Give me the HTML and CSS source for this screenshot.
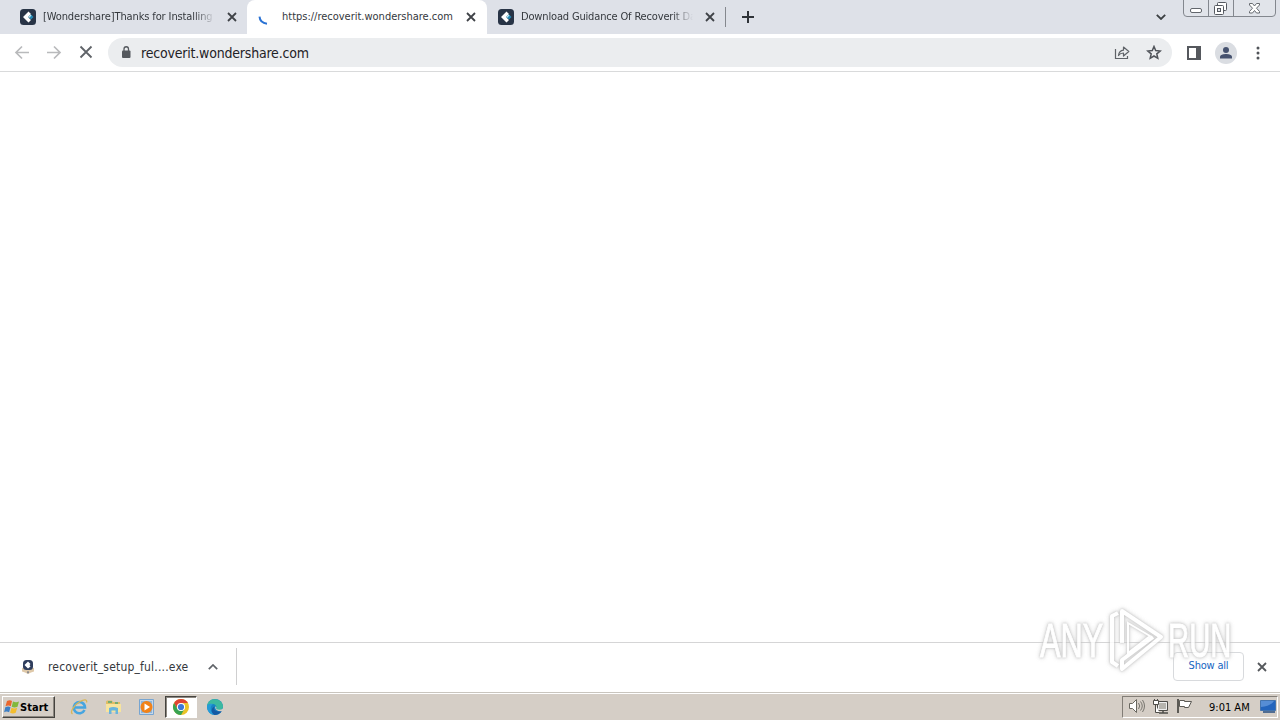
FILE: index.html
```
<!DOCTYPE html>
<html>
<head>
    <meta charset="utf-8">
    <title>recoverit.wondershare.com</title>
    <link rel="stylesheet" href="styles.css">
</head>
<body>
<svg class="defs" width="0" height="0">
    <symbol id="logo" viewBox="0 0 16 16">
        <rect width="16" height="16" rx="3.5" fill="#283446"/>
        <path d="M8.500 2.500L11 5 8 8l3 3-2.500 2.500L3 8z" fill="#fff"/>
        <path d="M11 5.500l2.500 2.500L11 10.500 8.500 8z" fill="#2489b5"/>
        <path d="M8 8l2.500-2.500 1 1L9 9z" fill="#b9e6f3"/>
    </symbol>
    <symbol id="close" viewBox="0 0 10 10">
        <path d="M1 1l8 8M9 1l-8 8" fill="none" stroke="currentColor" stroke-width="1.8"/>
    </symbol>
</svg>
<div id="tabs">
    <div class="tab">
        <svg class="favicon"><use href="#logo"/></svg>
        <div class="title fade"><span class="t1">[Wondershare]Thanks for Installing R</span></div>
        <svg class="x"><use href="#close"/></svg>
    </div>
    <div class="tab active">
        <svg class="favicon" viewBox="0 0 16 16"><path d="M1.500 7.700c.3 3.600 3 6.500 7.500 7" fill="none" stroke="#2a72d4" stroke-width="2"/></svg>
        <div class="title"><span class="t2">https://recoverit.wondershare.com</span></div>
        <svg class="x"><use href="#close"/></svg>
    </div>
    <div class="tab last">
        <svg class="favicon"><use href="#logo"/></svg>
        <div class="title fade"><span class="t3">Download Guidance Of Recoverit Data</span></div>
        <svg class="x"><use href="#close"/></svg>
    </div>
    <div class="divider"></div>
    <svg class="plus" viewBox="0 0 12 12"><path d="M6 0v12M0 6h12" stroke="#2f3338" stroke-width="2"/></svg>
    <svg class="chevron" viewBox="0 0 10 6"><path d="M.8.8L5 5 9.2.8" fill="none" stroke="#3c4043" stroke-width="1.8"/></svg>
    <svg class="winbuttons" viewBox="0 0 94 18">
        <path d="M.5 0v13q0 3.500 3.500 3.500h85q3.500 0 3.500-3.500V0" fill="#e1e4ea" stroke="#83878e"/>
        <path d="M25.500 0v16M50.500 0v16" stroke="#83878e"/>
        <rect x="7.500" y="8.500" width="11" height="4" rx="1.500" fill="#fff" stroke="#62666c"/>
        <rect x="34.500" y="2.500" width="9" height="8" rx="1" fill="#fff" stroke="#555960"/>
        <rect x="31.500" y="5.500" width="9" height="9" rx="1" fill="#fff" stroke="#555960"/>
        <rect x="34.500" y="8.500" width="3" height="3" fill="#e1e4ea" stroke="#555960"/>
        <path d="M66.500 3.500h3l2 2.500 2-2.500h3v1.500l-3 3.200 3 3.300v1.500h-3l-2-2.500-2 2.500h-3v-1.500l3-3.300-3-3.200z" fill="#fff" stroke="#666a70"/>
    </svg>
</div>
<div id="toolbar">
    <svg class="nav" viewBox="0 0 16 16"><path d="M15 7.500H2M8 1.500l-6 6 6 6" fill="none" stroke="#b9babc" stroke-width="1.700"/></svg>
    <svg class="nav" viewBox="0 0 16 16"><path d="M1 7.500h13M8 1.500l6 6-6 6" fill="none" stroke="#b9babc" stroke-width="1.700"/></svg>
    <svg class="nav" viewBox="0 0 16 16"><path d="M2.500 1.500l11 11M13.500 1.500l-11 11" stroke="#5f6368" stroke-width="1.800"/></svg>
    <div id="omnibox">
        <svg class="lock" viewBox="0 0 10 13"><rect x="1" y="4.500" width="8.500" height="7.500" rx="1" fill="#55595e"/><path d="M3 5V3a2.250 2.250 0 0 1 4.500 0v2" fill="none" stroke="#55595e" stroke-width="1.300"/></svg>
        <div class="url"><span>recoverit.wondershare.com</span></div>
        <svg class="share" viewBox="0 0 16 16"><path d="M1.500 4v9.500h12V11" fill="none" stroke="#5f6368" stroke-width="1.200"/><path d="M4.500 10.500c.4-3.500 2-5 5-5.300V2l5.300 4.500-5.300 4.500V8c-2.500 0-4 1-5 2.500z" fill="none" stroke="#5f6368" stroke-width="1.200" stroke-linejoin="round"/></svg>
        <svg class="star" viewBox="0 0 16 16"><path d="M8 1.500l1.700 4.100 4.500.4-3.400 2.900 1 4.400L8 11l-3.800 2.300 1-4.400L1.800 6l4.500-.4z" fill="none" stroke="#50545a" stroke-width="1.500"/></svg>
    </div>
    <svg class="panel" viewBox="0 0 14 14"><path d="M1 1h12v12H1z" fill="#fff" stroke="#55585d" stroke-width="2"/><path d="M9 1h4v12H9z" fill="#55585d"/></svg>
    <svg class="profile" viewBox="0 0 22 22"><circle cx="11" cy="11" r="11" fill="#dadde2"/><circle cx="11" cy="8" r="3" fill="#46526f"/><path d="M5 16.500v-1.500c0-2.200 3.500-3 6-3s6 .8 6 3v1.500z" fill="#46526f"/></svg>
    <svg class="dots" viewBox="0 0 4 14"><circle cx="2" cy="2" r="1.500"/><circle cx="2" cy="7" r="1.500"/><circle cx="2" cy="12" r="1.500"/></svg>
</div>
<div id="page"></div>
<div id="downloads">
    <svg class="file" viewBox="0 0 14 16"><path d="M1 9l2-.5 4 2 4-2 2 .5v3.500l-3 1-3 1.500-3-1.500-3-1z" fill="#dfc9a9"/><rect x="2" y="1" width="10" height="10" rx="3.500" fill="#2f3d5c"/><path d="M7 2.500l2.500 2.500-1 1 1 1.500L7 9.500 3.500 6z" fill="#fff"/><path d="M6 13l1-1 1 1-1 2z" fill="#6f7788"/></svg>
    <div class="filename"><span>recoverit_setup_ful....exe</span></div>
    <svg class="up" viewBox="0 0 10 6"><path d="M.8 5.200L5 1l4.200 4.200" fill="none" stroke="#5f6368" stroke-width="1.700"/></svg>
    <div class="separator"></div>
    <a class="showall" href="#"><span>Show all</span></a>
    <svg class="x"><use href="#close"/></svg>
</div>
<div id="taskbar">
    <div class="start">
        <svg viewBox="0 0 16 16"><path d="M3 2q3-1.500 5 0L6.800 7.200Q4.500 6 1.500 7.200z" fill="#ea662d"/><path d="M9 2.500q3 1.500 6 0l-1.500 5.200q-3 1.500-5.800 0z" fill="#82b83b"/><path d="M1.300 8.200q3-1.200 5.200 0l-1.400 5q-2.600-1.200-5 0z" fill="#3d7fc5"/><path d="M7.500 8.700q3 1.500 5.700 0l-1.500 5.100q-2.700 1.500-5.600 0z" fill="#f3bd2e"/></svg>
        <span>Start</span>
    </div>
    <div class="app"><svg viewBox="0 0 18 18"><path d="M14.500 12A5.600 5.600 0 1 1 15 9.500H5" fill="none" stroke="#46a5e0" stroke-width="2.600"/><path d="M2.500 16C-.5 14 4 7 10 3.500c4.500-2.500 7.500-2 6.500 1" fill="none" stroke="#d9b657" stroke-width="1.300"/></svg></div>
    <div class="app"><svg viewBox="0 0 18 18"><path d="M2 3.500l1-1h5l1 1.500h7v10H2z" fill="#dfbd65"/><path d="M2 6h15v8H2z" fill="#f7e49d"/><path d="M5 10q4-2 9 0v6h-2.500v-3.500h-4V16H5z" fill="#69b5dc"/><path d="M4 4h4M11 5h3" stroke="#55a775" stroke-width="1.500"/></svg></div>
    <div class="app"><svg viewBox="0 0 18 18"><path d="M1.500 1.500h14v15h-14z" fill="#c6d7e8" stroke="#77a5d1"/><path d="M3 3h11v12H3z" fill="#8cb6dd"/><circle cx="8.500" cy="9" r="6" fill="#f18218"/><path d="M6.500 5.500L12 9l-5.500 3.500z" fill="#fff"/></svg></div>
    <div class="app pressed"><svg viewBox="0 0 18 18"><circle cx="9" cy="9" r="8" fill="#eac328"/><path d="M2.070 5A8 8 0 0 1 15.930 5H9L5.540 11z" fill="#df4434"/><path d="M2.070 5A8 8 0 0 0 9 17l3.460-6H5.540z" fill="#38a352"/><circle cx="9" cy="9" r="4.100" fill="#fff"/><circle cx="9" cy="9" r="3.100" fill="#3c78d8"/></svg></div>
    <div class="app"><svg viewBox="0 0 18 18"><circle cx="9" cy="9" r="8" fill="#1684c4"/><path d="M1 8C2 2 7 .5 11 1.500c4 1 6 4.500 6 7.500-.5 3-4 4-7 2.500 1-2 .5-5-3-5.500C4.500 5.600 2 6.500 1 8z" fill="#3cb9a0"/><path d="M1 8c1-2 3.500-2.400 6-2-3 2-3.500 7 1 10.700C4 16.500 1 13 1 8z" fill="#259bd8"/><path d="M8.500 8.500c-1.500 3.500 2 6.500 7.500 4-1.500 3-5 4.500-7.500 4.500C4.500 14.500 5 10 8.500 8.500z" fill="#1559a3"/><path d="M9 8.500q2 .2 1.200 2.400 3.500 1.800 6.800-.4l.5 2.500q-8 1.500-8.500-4.500z" fill="#d5cec6"/></svg></div>
    <div class="tray">
        <svg class="speaker" viewBox="0 0 18 16"><path d="M1.500 4.500h3l4-4v13l-4-4h-3z" fill="#fff" stroke="#69675f"/><path d="M10.500 4q2.500 3 0 6M12.500 2.500q3.500 4.500 0 9M14.500 1q4 6 0 12" fill="none" stroke="#77756e"/></svg>
        <svg class="network" viewBox="0 0 18 16"><path d="M5.500 2.500h10v9h-10z" fill="#b6b4ae" stroke="#4e4d49"/><path d="M6.500 3.500h8v7h-8z" fill="none" stroke="#eee"/><path d="M7 14h9M11 11.500v2" stroke="#4e4d49" stroke-width="1.500"/><path d="M1.500 1.500h5v4h-5zM2.500 0v2M5.500 0v2M3.500 5.500v8h4" fill="#fff" stroke="#4e4d49"/></svg>
        <svg class="flag" viewBox="0 0 18 16"><path d="M2 0v14" stroke="#5c5a55" stroke-width="2"/><path d="M3.500 1.500h5v1h7l-3 6h-4v-1h-5z" fill="#fff" stroke="#5c5a55"/></svg>
        <div class="clock"><span>9:01 AM</span></div>
        <svg class="desktop" viewBox="0 0 16 14"><path d="M.5 .5h15v10H.5z" fill="#2465bd" stroke="#4474ae"/><path d="M1 1h13q-3 5-13 6z" fill="#568dd5"/><path d="M3 12h12" stroke="#254c80" stroke-width="1.500"/></svg>
    </div>
</div>
<div id="watermark">
    <div class="any"><span>ANY</span></div>
    <svg viewBox="0 0 60 68"><path d="M12 7L6 10v46l6 4M16 37V5l39 26-39 32v-9l31-23" fill="none" stroke="#fff" stroke-width="4" stroke-linejoin="round"/><path d="M22 17l22 13-22 17z" fill="none" stroke="#fff" stroke-width="2"/></svg>
    <div class="run"><span>RUN</span></div>
</div>
</body>
</html>
```
FILE: styles.css
```
body {
    margin: 0px;
    width: 1280px;
    height: 720px;
    overflow: hidden;
    background: #fff;
    font-family: "DejaVu Sans Condensed", "DejaVu Sans", sans-serif;
    font-stretch: condensed;
    font-size: 11px;
    color: #34383d;
    display: flex;
    flex-direction: column;
}
svg {
    display: block;
    flex: none;
}
span {
    white-space: nowrap;
}
.defs {
    position: absolute;
}
#tabs {
    height: 34px;
    background: #dee1e8;
    display: flex;
    align-items: center;
    padding-left: 8px;
    box-sizing: border-box;
    flex: none;
}
.tab {
    width: 239px;
    height: 34px;
    box-sizing: border-box;
    padding: 0 10px 0 12px;
    display: flex;
    align-items: center;
}
.tab.active {
    width: 240px;
    background: #fff;
    border-radius: 8px 8px 0 0;
    padding-left: 11px;
    padding-right: 11px;
}
.tab.last {
    width: 238px;
    padding-left: 11px;
}
.favicon {
    width: 16px;
    height: 16px;
}
.title {
    width: 172px;
    margin-left: 7px;
    overflow: hidden;
    line-height: 18px;
}
.active .title {
    margin-left: 8px;
}
.fade {
    -webkit-mask-image: linear-gradient(to right, #000 88%, transparent);
    mask-image: linear-gradient(to right, #000 88%, transparent);
}
.t1 {
    letter-spacing: -0.12px;
}
.t2 {
    letter-spacing: -0.01px;
}
.t3 {
    letter-spacing: -0.16px;
}
.x {
    width: 10px;
    height: 10px;
    color: #3f4247;
    margin-left: auto;
}
.divider {
    width: 1px;
    height: 20px;
    background: #85888e;
}
.plus {
    width: 12px;
    height: 12px;
    margin-left: 16px;
}
.chevron {
    width: 10px;
    height: 6px;
    margin-left: auto;
}
.winbuttons {
    width: 94px;
    height: 18px;
    align-self: flex-start;
    margin: 0 3px 0 17px;
}
#toolbar {
    height: 38px;
    box-sizing: border-box;
    border-bottom: 1px solid #d9dadb;
    display: flex;
    align-items: center;
    padding-left: 14px;
    flex: none;
}
.nav {
    width: 16px;
    height: 16px;
    margin-right: 16px;
}
#omnibox {
    width: 1064px;
    height: 29px;
    box-sizing: border-box;
    margin-left: -2px;
    padding: 0 10px 0 13px;
    border-radius: 15px;
    background: #ebedef;
    display: flex;
    align-items: center;
}
.lock {
    width: 10px;
    height: 13px;
}
.url {
    margin-left: 10px;
    font-size: 14px;
    color: #1f2226;
}
.url span {
    letter-spacing: -0.2px;
}
.share {
    width: 16px;
    height: 16px;
    margin-left: auto;
}
.star {
    width: 16px;
    height: 16px;
    margin-left: 16px;
}
.panel {
    width: 14px;
    height: 14px;
    margin-left: 15px;
}
.profile {
    width: 22px;
    height: 22px;
    margin-left: 14px;
}
.dots {
    width: 4px;
    height: 14px;
    margin-left: 19px;
    fill: #515459;
}
#page {
    flex: 1;
}
#downloads {
    height: 50px;
    box-sizing: border-box;
    border-top: 1px solid #d5d5d6;
    display: flex;
    align-items: center;
    padding: 0 13px 2px 21px;
    flex: none;
}
.file {
    width: 14px;
    height: 16px;
}
.filename {
    margin-left: 13px;
    width: 160px;
    font-size: 12px;
}
.filename span {
    letter-spacing: 0.19px;
}
.up {
    width: 10px;
    height: 6px;
}
.separator {
    width: 1px;
    height: 37px;
    margin-left: 18px;
    background: #cfcfd0;
}
.showall {
    width: 71px;
    height: 29px;
    box-sizing: border-box;
    margin-left: auto;
    border: 1px solid #d8dadd;
    border-radius: 4px;
    color: #1765c1;
    text-decoration: none;
    text-align: center;
    line-height: 26px;
    letter-spacing: -0.2px;
}
#downloads .x {
    margin-left: 13px;
    color: #55585c;
}
#taskbar {
    height: 28px;
    box-sizing: border-box;
    border-top: 1px solid #c9c5be;
    box-shadow: inset 0 1px #fff;
    background: #d5cec6;
    display: flex;
    align-items: center;
    padding: 1px 2px 0 1px;
    flex: none;
}
.start {
    width: 53px;
    height: 22px;
    box-sizing: border-box;
    border: 1px solid #fff;
    border-right-color: #45433f;
    border-bottom-color: #45433f;
    box-shadow: inset -1px -1px #8c8780;
    display: flex;
    align-items: center;
    padding-left: 1px;
    margin-left: 1px;
    margin-right: 8px;
    font-weight: bold;
    color: #000;
}
.start svg {
    width: 16px;
    height: 16px;
}
.start span {
    letter-spacing: 0.05px;
}
.app {
    width: 32px;
    height: 22px;
    box-sizing: border-box;
    margin-right: 2px;
    display: flex;
    align-items: center;
    justify-content: center;
}
.app svg {
    width: 18px;
    height: 18px;
}
.pressed {
    background: #fff;
    border: 1px solid #45433f;
    border-right-color: #fff;
    border-bottom-color: #fff;
    box-shadow: inset 1px 1px #8c8780;
}
.tray {
    width: 156px;
    height: 22px;
    box-sizing: border-box;
    margin-left: auto;
    padding-left: 5px;
    border: 1px solid #827d76;
    border-right-color: #fff;
    border-bottom-color: #fff;
    display: flex;
    align-items: center;
    color: #000;
}
.tray svg {
    width: 18px;
    height: 16px;
}
.network, .flag {
    margin-left: 6px;
}
.clock {
    width: 42px;
    margin-left: 15px;
}
.clock span {
    letter-spacing: 0px;
}
.tray .desktop {
    width: 16px;
    height: 14px;
    margin-left: 9px;
}
#watermark {
    position: absolute;
    left: 1040px;
    top: 606px;
    width: 195px;
    height: 68px;
    display: flex;
    align-items: center;
    opacity: 0.85;
    color: #fff;
    font: 48px "Liberation Sans", sans-serif;
    -webkit-text-stroke: 1px #fff;
    filter: drop-shadow(0 0 1px #bbb) drop-shadow(0 0 2px #ccc);
}
#watermark span {
    display: block;
    transform-origin: left;
}
.any {
    width: 66px;
}
.any span {
    transform: scaleX(0.64);
}
.run {
    width: 62px;
    margin-left: 2px;
}
.run span {
    transform: scaleX(0.61);
}
#watermark svg {
    width: 60px;
    height: 68px;
}
```
